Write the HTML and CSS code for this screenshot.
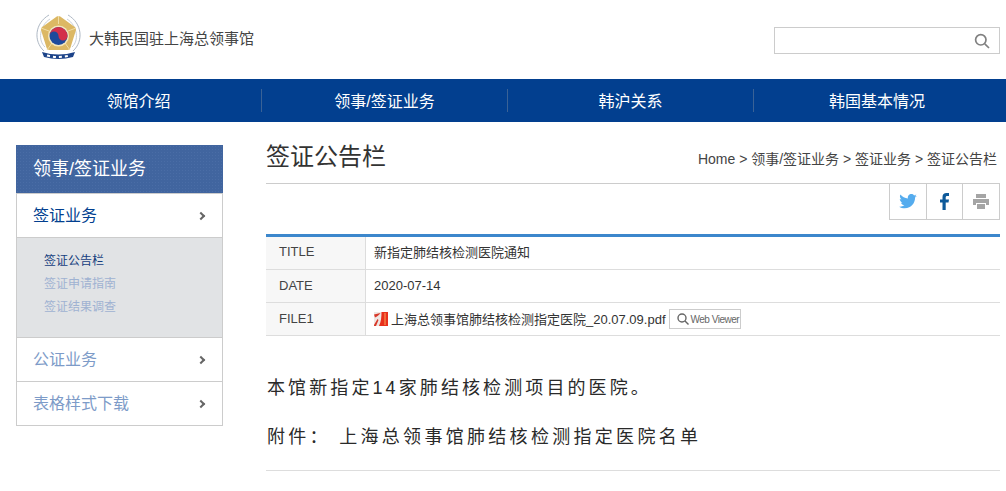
FILE: index.html
```html
<!DOCTYPE html>
<html lang="zh">
<head>
    <meta charset="UTF-8">
    <meta name="viewport" content="width=device-width, initial-scale=1.0">
    <title>签证公告栏</title>
    <link rel="stylesheet" href="styles.css">
</head>

<body>
    <header class="top">
        <div class="brand">
            <svg class="emblem" width="46" height="46" viewBox="0 0 46 46">
                <path d="M13 1C-1 9 -3 27 8 37" fill="none" stroke="#aeb8c4" stroke-width="1"/>
                <path d="M32 1C46 9 48 27 37 37" fill="none" stroke="#aeb8c4" stroke-width="1"/>
                <path d="M14 5C3 12 2 27 9 33" fill="none" stroke="#c9d0d8" stroke-width="1"/>
                <path d="M31 5C42 12 43 27 36 33" fill="none" stroke="#c9d0d8" stroke-width="1"/>
                <path d="M22.500 5L37 15.500L31.500 33H13.500L8 15.500Z" fill="#dcb864" stroke="#dcb864" stroke-width="6" stroke-linejoin="round"/>
                <path d="M22.500 2V10M5 14L13 17M40 14L32 17M11 36L16 29M34 36L29 29" stroke="#f0dda6" stroke-width="1"/>
                <circle cx="22.500" cy="22" r="10.500" fill="#f3e6bd"/>
                <circle cx="22.500" cy="22" r="9" fill="#1d4a9c"/>
                <path d="M13.500 22A9 9 0 0 1 31.500 22A4.500 4.500 0 0 1 22.500 22A4.500 4.500 0 0 0 13.500 22Z" fill="#d3304a"/>
                <path d="M6 38Q22.500 43 39 38L37 43Q22.500 47 8 43Z" fill="#1c4389"/>
                <path d="M11 41.500Q22.500 44.500 34 41.500" fill="none" stroke="#fff" stroke-width="2" stroke-dasharray="3 3"/>
            </svg>
            <span class="brand-name">大韩民国驻上海总领事馆</span>
        </div>
        <div class="search">
            <svg width="16" height="16" viewBox="0 0 16 16">
                <circle cx="6.800" cy="6.800" r="5.200" fill="none" stroke="#808080" stroke-width="1.700"/>
                <path d="M10.800 10.800L15 15" stroke="#808080" stroke-width="1.700"/>
            </svg>
        </div>
    </header>

    <nav class="gnb">
        <a>领馆介绍</a>
        <a>领事/签证业务</a>
        <a>韩沪关系</a>
        <a>韩国基本情况</a>
    </nav>

    <div class="wrap">
        <aside class="side">
            <h2 class="side-title">领事/签证业务</h2>
            <ul class="side-menu">
                <li class="side-item active">签证业务<i class="chev"></i></li>
                <li class="side-sub">
                    <a class="on">签证公告栏</a>
                    <a>签证申请指南</a>
                    <a>签证结果调查</a>
                </li>
                <li class="side-item">公证业务<i class="chev"></i></li>
                <li class="side-item">表格样式下载<i class="chev"></i></li>
            </ul>
        </aside>

        <main class="main">
            <div class="page-head">
                <h1>签证公告栏</h1>
                <p class="crumb">Home &gt; 领事/签证业务 &gt; 签证业务 &gt; 签证公告栏</p>
            </div>
            <div class="share">
                <a>
                    <svg width="18" height="15" viewBox="0 0 20 17">
                        <path fill="#55acee" d="M20 2.200c-.7.300-1.500.500-2.300.600.800-.500 1.500-1.300 1.800-2.200-.800.500-1.700.800-2.600 1C16.100.600 15 0 13.900 0c-2.600 0-4.600 2.400-4 5C6.500 4.800 3.500 3.200 1.400.700.300 2.500.800 4.900 2.600 6.100c-.7 0-1.300-.200-1.900-.500 0 1.900 1.400 3.700 3.300 4.100-.6.200-1.300.2-1.900.1.500 1.600 2 2.800 3.800 2.800C4.200 14 2.100 14.600 0 14.400 1.800 15.500 4 16.200 6.300 16.200c7.600 0 11.900-6.400 11.700-12.200.8-.5 1.500-1.200 2-1.800z"/>
                    </svg>
                </a>
                <a>
                    <svg width="9" height="17" viewBox="0 0 9 17">
                        <path fill="#0e5a9a" d="M2.500 17V9.500H0V6.500H2.500V4C2.500 1.400 4 0 6.500 0H9V3H7.300C6 3 5.700 3.600 5.700 4.500V6.500H9L8.500 9.500H5.700V17Z"/>
                    </svg>
                </a>
                <a>
                    <svg width="16" height="15" viewBox="0 0 16 15">
                        <path fill="#a5a5a5" d="M3 0H13V4H3ZM0 5H16V11H13V9H3V11H0ZM4 10H12V15H4Z"/>
                    </svg>
                </a>
            </div>

            <table class="view">
                <tr>
                    <th>TITLE</th>
                    <td>新指定肺结核检测医院通知</td>
                </tr>
                <tr>
                    <th>DATE</th>
                    <td>2020-07-14</td>
                </tr>
                <tr>
                    <th>FILE1</th>
                    <td class="file-cell">
                        <div class="file">
                            <svg width="14" height="14" viewBox="0 0 14 14">
                                <rect width="14" height="14" fill="#efe6e3"/>
                                <path fill="#e8301c" d="M7.500 0H14V14H5C7 10 7.500 5 7.500 0Z"/>
                                <path fill="#f26a3c" d="M10 1H12V13H10Z"/>
                                <path fill="#d8392a" d="M0 2.500L6.500 1C5 3 3 4.500 1 5.500ZM0 13L3.500 7L4.500 8L2 14H0Z"/>
                            </svg>
                            <span class="file-name">上海总领事馆肺结核检测指定医院_20.07.09.pdf</span>
                            <a class="viewer">
                                <svg width="12" height="12" viewBox="0 0 12 12">
                                    <circle cx="5" cy="5" r="4" fill="none" stroke="#666" stroke-width="1.400"/>
                                    <path d="M8 8L11.500 11.500" stroke="#666" stroke-width="1.400"/>
                                </svg>
                                <span>Web Viewer</span>
                            </a>
                        </div>
                    </td>
                </tr>
            </table>

            <div class="article">
                <p>本馆新指定14家肺结核检测项目的医院。</p>
                <p>附件： 上海总领事馆肺结核检测指定医院名单</p>
            </div>
        </main>
    </div>
</body>
</html>
```

FILE: styles.css
```css
* {
    box-sizing: border-box;
}

html, body {
    height: 491px;
    overflow: hidden;
}

body {
    margin: 0;
    padding: 0;
    background: #fff;
    color: #333;
    font-family: "Liberation Sans", Arial, "Noto Sans CJK SC", sans-serif;
    font-size: 14px;
}

ul {
    list-style: none;
    margin: 0;
    padding: 0;
}

/* header */
.top {
    height: 79px;
    display: flex;
    justify-content: space-between;
    align-items: flex-start;
    padding: 0 6px 0 36px;
}

.brand {
    display: flex;
    align-items: center;
    gap: 7px;
    padding-top: 14px;
}

.emblem {
    display: block;
}

.brand-name {
    font-size: 15px;
    color: #444;
    margin-top: 1px;
}

.search {
    width: 226px;
    height: 27px;
    margin-top: 27px;
    border: 1px solid #ccc;
    display: flex;
    justify-content: flex-end;
    align-items: center;
    padding-right: 9px;
}

/* gnb */
.gnb {
    height: 43px;
    background: #023f8f;
    display: flex;
    align-items: center;
    padding-left: 16px;
}

.gnb a {
    width: 246px;
    height: 23px;
    line-height: 25px;
    text-align: center;
    color: #fff;
    font-size: 16px;
    border-right: 1px solid #3a6296;
}

.gnb a:last-child {
    border-right: none;
}

/* layout */
.wrap {
    display: flex;
    align-items: flex-start;
    padding: 23px 6px 0 16px;
    gap: 43px;
}

/* side menu */
.side {
    width: 207px;
    flex-shrink: 0;
}

.side-title {
    margin: 0;
    height: 48px;
    line-height: 48px;
    padding-left: 17px;
    background-color: #41659f;
    background-image: radial-gradient(#4a6da6 1px, transparent 1px);
    background-size: 3px 3px;
    color: #fff;
    font-size: 18px;
    font-weight: normal;
}

.side-menu {
    border: 1px solid #ccc;
    border-top: none;
}

.side-item {
    height: 44px;
    line-height: 43px;
    padding: 0 16px;
    font-size: 16px;
    color: #7d9bc8;
    display: flex;
    justify-content: space-between;
    align-items: center;
    border-top: 1px solid #ccc;
}

.side-item.active {
    color: #023f8f;
}

.chev {
    width: 6px;
    height: 6px;
    margin-right: 2px;
    border-top: 2px solid #666;
    border-right: 2px solid #666;
    transform: rotate(45deg);
}

.side-sub {
    height: 100px;
    background: #e1e3e5;
    border-top: 1px solid #ccc;
    padding: 12px 0 0 27px;
}

.side-sub a {
    display: block;
    height: 23px;
    line-height: 23px;
    font-size: 12px;
    color: #9fb2d2;
}

.side-sub a.on {
    color: #153e7e;
}

/* content */
.main {
    width: 734px;
}

.page-head {
    height: 39px;
    display: flex;
    justify-content: space-between;
    align-items: flex-start;
    border-bottom: 1px solid #ccc;
}

.page-head h1 {
    margin: 0;
    font-size: 24px;
    font-weight: normal;
    line-height: 24px;
    color: #333;
}

.crumb {
    margin: 6px 3px 0 0;
    font-size: 14px;
    line-height: 16px;
    color: #444;
}

.share {
    display: flex;
    justify-content: flex-end;
}

.share a {
    width: 38px;
    height: 36px;
    border: 1px solid #ccc;
    border-top: none;
    margin-left: -1px;
    display: flex;
    justify-content: center;
    align-items: center;
}

.share a:nth-child(2) {
    width: 37px;
}

.view {
    width: 100%;
    margin-top: 14px;
    border-collapse: separate;
    border-spacing: 0;
    border-top: 3px solid #3c87cc;
    font-size: 13px;
}

.view th, .view td {
    height: 33px;
    padding: 0 0 1px 8px;
    border-bottom: 1px solid #ddd;
    text-align: left;
    font-weight: normal;
    color: #333;
}

.view th {
    width: 100px;
    padding-left: 13px;
    background: #f7f7f7;
    border-right: 1px solid #ddd;
    color: #444;
}

.view tr:first-child th, .view tr:first-child td {
    padding-bottom: 3px;
}

.view .file-cell {
    padding-bottom: 0;
}

.file {
    display: flex;
    align-items: center;
    gap: 3px;
}

.file-name {
    margin-bottom: 2px;
}

.viewer {
    height: 20px;
    width: 72px;
    border: 1px solid #ccc;
    display: flex;
    align-items: center;
    gap: 2px;
    padding-left: 7px;
    font-size: 10px;
    letter-spacing: -0.500px;
    white-space: nowrap;
    color: #666;
    background: #fff;
}

.article {
    height: 135px;
    padding: 38px 0 0 1px;
    border-bottom: 1px solid #ddd;
    font-size: 18px;
    letter-spacing: 3.100px;
    color: #2a2a2a;
}

.article p {
    margin: 0 0 20px;
    line-height: 29px;
}

.article p + p {
    letter-spacing: 3.300px;
}
```
